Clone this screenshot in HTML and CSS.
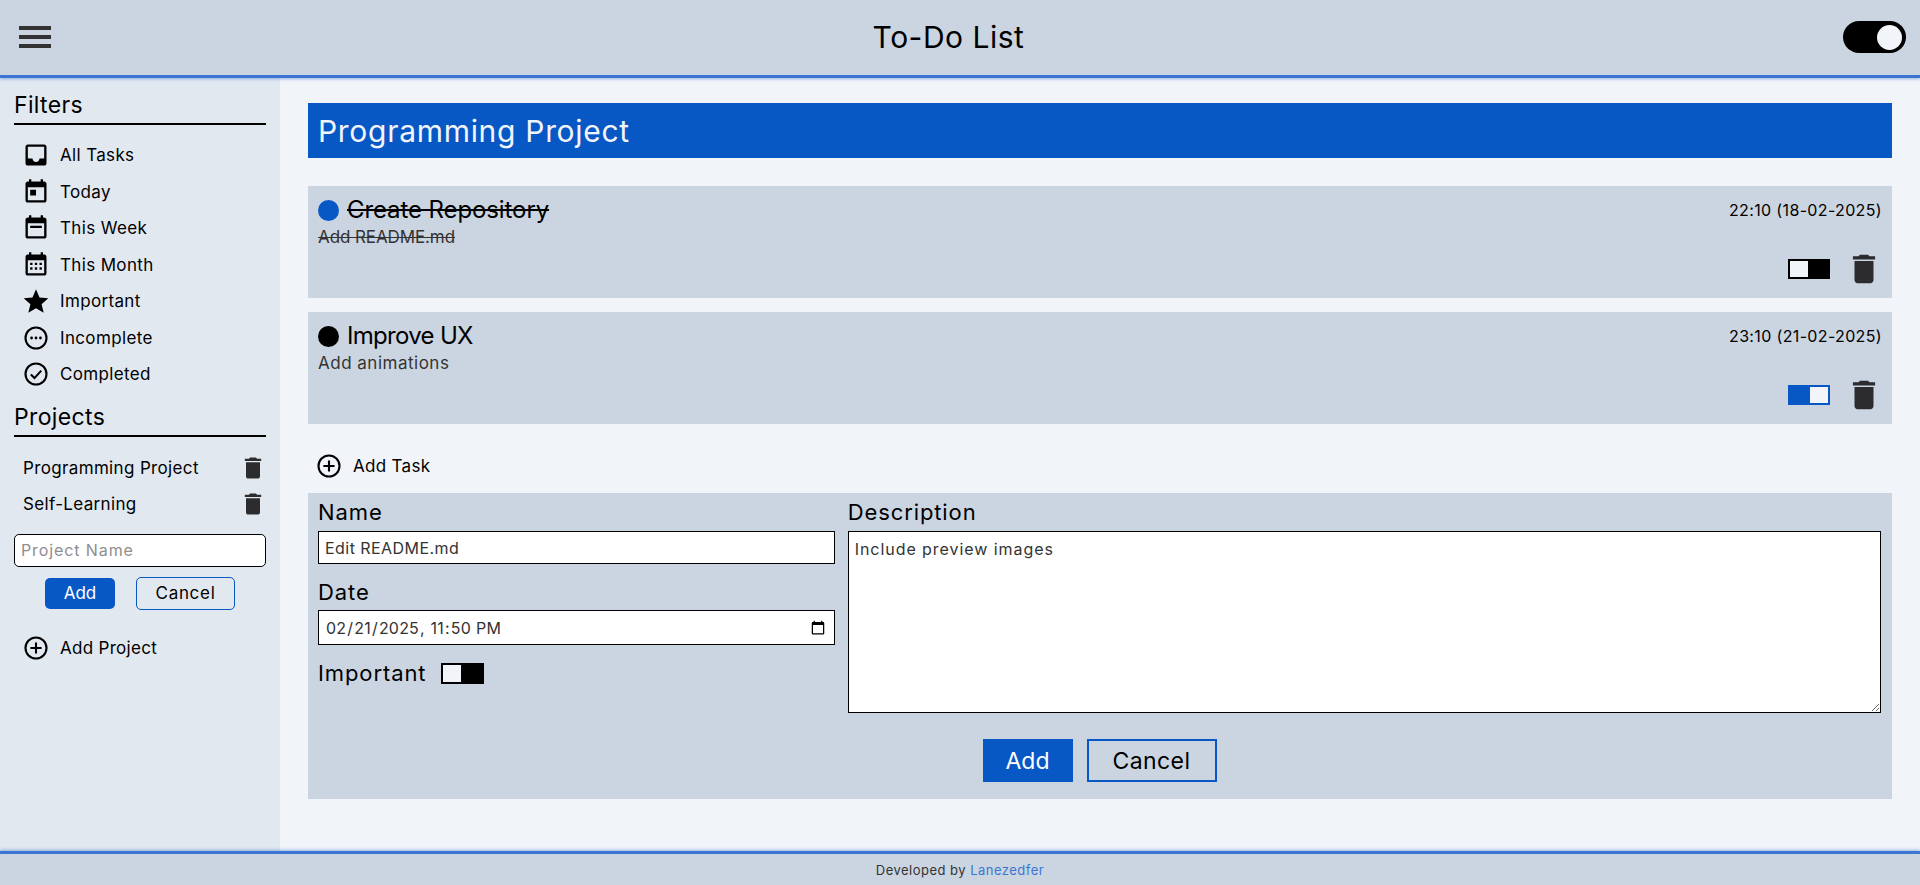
FILE: index.html
```html
<!DOCTYPE html>
<html lang="en">
<head>
<meta charset="utf-8">
<title>To-Do List</title>
<link rel="stylesheet" href="styles.css">
</head>
<body>
<svg class="defs" width="0" height="0" aria-hidden="true">
  <symbol id="i-trash" viewBox="0 0 24 24"><path d="M6 19c0 1.1.9 2 2 2h8c1.1 0 2-.9 2-2V7H6v12zM19 4h-3.5l-1-1h-5l-1 1H5v2h14V4z"/></symbol>
  <symbol id="i-plus" viewBox="0 0 24 24"><circle cx="12" cy="12" r="9" fill="none" stroke="currentColor" stroke-width="1.8"/><path d="M11.1 7.2h1.8v3.9h3.9v1.8h-3.9v3.9h-1.8v-3.9H7.2v-1.8h3.9z"/></symbol>
</svg>
<header class="topbar">
  <button class="menu" aria-label="Menu"><span></span><span></span><span></span></button>
  <h1 class="app-title">To-Do List</h1>
  <span class="theme"><span class="theme-knob"></span></span>
</header>
<div class="body">
  <aside class="side">
    <h2 class="side-head">Filters</h2>
    <ul class="nav">
      <li><svg class="ic" viewBox="0 0 24 24"><path d="M19 3H5c-1.1 0-2 .9-2 2v14c0 1.1.9 2 2 2h14c1.1 0 2-.9 2-2V5c0-1.1-.9-2-2-2zm0 12h-4c0 1.66-1.35 3-3 3s-3-1.34-3-3H5V5h14v10z"/></svg>All Tasks</li>
      <li><svg class="ic" viewBox="0 0 24 24"><path d="M19 3h-1V1h-2v2H8V1H6v2H5c-1.11 0-1.99.9-1.99 2L3 19c0 1.1.89 2 2 2h14c1.1 0 2-.9 2-2V5c0-1.1-.9-2-2-2zm0 16H5V8h14v11zM7 10h5v5H7z"/></svg>Today</li>
      <li><svg class="ic" viewBox="0 0 24 24"><path d="M19 3h-1V1h-2v2H8V1H6v2H5c-1.11 0-1.99.9-1.99 2L3 19c0 1.1.89 2 2 2h14c1.1 0 2-.9 2-2V5c0-1.1-.9-2-2-2zm0 16H5V8h14v11zM7 10h10v2H7z"/></svg>This Week</li>
      <li><svg class="ic" viewBox="0 0 24 24"><path d="M19 3h-1V1h-2v2H8V1H6v2H5c-1.11 0-1.99.9-1.99 2L3 19c0 1.1.89 2 2 2h14c1.1 0 2-.9 2-2V5c0-1.1-.9-2-2-2zm0 16H5V8h14v11zM7 10h2v2H7zm4 0h2v2h-2zm4 0h2v2h-2zM7 14h2v2H7zm4 0h2v2h-2zm4 0h2v2h-2z"/></svg>This Month</li>
      <li><svg class="ic" viewBox="0 0 24 24"><path d="M12 18.2l-6.6 3.9 1.8-7.4L1.5 9.6l7.5-.6L12 2l3 7 7.5.6-5.7 5.1 1.8 7.4z"/></svg>Important</li>
      <li><svg class="ic" viewBox="0 0 24 24"><circle cx="12" cy="12" r="9" fill="none" stroke="currentColor" stroke-width="1.8"/><circle cx="8.2" cy="12" r="1.2"/><circle cx="12" cy="12" r="1.2"/><circle cx="15.8" cy="12" r="1.2"/></svg>Incomplete</li>
      <li><svg class="ic" viewBox="0 0 24 24"><circle cx="12" cy="12" r="9" fill="none" stroke="currentColor" stroke-width="1.8"/><path d="M7.6 12.4l3.1 3.1 5.8-6.4" fill="none" stroke="currentColor" stroke-width="1.8"/></svg>Completed</li>
    </ul>
    <h2 class="side-head projects-head">Projects</h2>
    <ul class="projects">
      <li><span>Programming Project</span><svg class="ic-trash"><use href="#i-trash"/></svg></li>
      <li><span>Self-Learning</span><svg class="ic-trash"><use href="#i-trash"/></svg></li>
    </ul>
    <input class="project-input" type="text" placeholder="Project Name">
    <div class="project-actions">
      <button class="btn-sm btn-sm-primary">Add</button>
      <button class="btn-sm btn-sm-ghost">Cancel</button>
    </div>
    <div class="add-row add-project"><svg class="ic"><use href="#i-plus"/></svg>Add Project</div>
  </aside>
  <main class="main">
    <h2 class="banner">Programming Project</h2>
    <article class="task">
      <div class="task-top">
        <h3 class="task-name done"><span class="dot dot-blue"></span><s>Create Repository</s></h3>
        <time class="task-time">22:10 (18-02-2025)</time>
      </div>
      <p class="task-desc task-desc-done"><s>Add README.md</s></p>
      <div class="task-foot">
        <span class="sw"><span class="sw-knob"></span></span>
        <svg class="task-trash"><use href="#i-trash"/></svg>
      </div>
    </article>
    <article class="task">
      <div class="task-top">
        <h3 class="task-name"><span class="dot"></span>Improve UX</h3>
        <time class="task-time">23:10 (21-02-2025)</time>
      </div>
      <p class="task-desc">Add animations</p>
      <div class="task-foot">
        <span class="sw sw-on"><span class="sw-knob"></span></span>
        <svg class="task-trash"><use href="#i-trash"/></svg>
      </div>
    </article>
    <div class="add-row add-task"><svg class="ic"><use href="#i-plus"/></svg>Add Task</div>
    <form class="form">
      <div class="form-grid">
        <div class="form-left">
          <label class="lbl" for="n">Name</label>
          <input id="n" class="field field-name" type="text" value="Edit README.md">
          <label class="lbl lbl-date" for="d">Date</label>
          <input id="d" class="field field-date" type="datetime-local" value="2025-02-21T23:50">
          <div class="important"><span class="lbl">Important</span><span class="sw sw-form"><span class="sw-knob"></span></span></div>
        </div>
        <div class="form-right">
          <label class="lbl" for="t">Description</label>
          <textarea id="t" class="field area">Include preview images</textarea>
        </div>
      </div>
      <div class="form-actions">
        <button type="button" class="btn btn-primary">Add</button>
        <button type="button" class="btn btn-ghost">Cancel</button>
      </div>
    </form>
  </main>
</div>
<footer class="foot">Developed by&nbsp;<a class="foot-link" href="#">Lanezedfer</a></footer>
</body>
</html>
```
FILE: styles.css
```css
* { box-sizing: border-box; }
html, body { height: 100%; }
body {
  margin: 0;
  display: flex;
  flex-direction: column;
  height: 885px;
  overflow: hidden;
  background: #f1f5f9;
  color: #000;
  font-family: Inter, "Noto Sans", sans-serif;
}
.defs { position: absolute; }
h1, h2, h3, p, ul { margin: 0; padding: 0; font-weight: 400; }
ul { list-style: none; }
svg { fill: currentColor; flex: none; display: block; }

.topbar {
  height: 78px;
  flex: none;
  position: relative;
  z-index: 2;
  display: flex;
  align-items: center;
  justify-content: space-between;
  padding: 0 14px 1px 19px;
  background: #cbd5e1;
  border-bottom: 3px solid #3a75d2;
  box-shadow: 0 1px 3px rgba(58, 117, 210, .5);
}
.menu {
  display: flex;
  flex-direction: column;
  gap: 5px;
  width: 32px;
  padding: 0;
  border: 0;
  background: none;
}
.menu span { height: 4px; background: #333; display: block; }
.app-title { font-size: 30px; letter-spacing: .5px; margin-left: 3px; }
.theme {
  width: 63px;
  height: 32px;
  border-radius: 16px;
  background: #000;
  display: flex;
  justify-content: flex-end;
  align-items: center;
  padding-right: 4px;
}
.theme-knob { width: 25px; height: 25px; border-radius: 50%; background: #f1f5f9; }

.body { flex: 1; display: flex; min-height: 0; }

.side {
  width: 280px;
  flex: none;
  background: #e2e8f0;
  padding: 12px 14px 0;
  font-size: 17px;
  letter-spacing: .35px;
}
.side-head {
  font-size: 23px;
  line-height: 30px;
  padding-bottom: 3px;
  border-bottom: 2px solid #000;
}
.nav { margin-top: 12px; }
.nav li {
  height: 36.5px;
  display: flex;
  align-items: center;
  gap: 10px;
  padding-left: 8px;
}
.ic { width: 28px; height: 28px; }
.projects-head { margin-top: 9px; }
.projects { margin-top: 13px; }
.projects li {
  height: 36.5px;
  display: flex;
  align-items: center;
  justify-content: space-between;
  padding: 0 2px 0 9px;
}
.ic-trash { width: 28px; height: 28px; color: #2c2c2e; margin-right: -3px; }
.project-input {
  display: block;
  width: 100%;
  height: 33px;
  margin-top: 11px;
  padding: 0 6px;
  border: 1px solid #000;
  border-radius: 5px;
  background: #fff;
  font: 16px Inter, sans-serif;
  letter-spacing: .9px;
}
.project-input::placeholder { color: #8e8e8e; }
.project-actions {
  display: flex;
  justify-content: center;
  align-items: center;
  gap: 21px;
  margin-top: 10px;
}
.btn-sm { font: 17px Inter, sans-serif; padding: 0; border-radius: 5px; }
.btn-sm-primary { width: 70px; height: 31px; border: 0; background: #0757c5; color: #fff; }
.btn-sm-ghost { width: 99px; height: 33px; border: 1px solid #0757c5; background: transparent; color: #000; letter-spacing: .7px; }
.add-row { display: flex; align-items: center; gap: 10px; font-size: 17px; letter-spacing: .3px; }
.add-project { margin-top: 24px; padding-left: 8px; }

.main { flex: 1; padding: 25px 28px 0; min-width: 0; }
.banner {
  height: 55px;
  line-height: 57px;
  padding-left: 10px;
  background: #0757c5;
  color: #f1f5f9;
  font-size: 30px;
  letter-spacing: .7px;
}
.task {
  height: 112px;
  margin-top: 14px;
  padding: 9px 10px 0;
  background: #cbd5e1;
  display: flex;
  flex-direction: column;
}
.banner + .task { margin-top: 28px; }
.task-top { display: flex; justify-content: space-between; align-items: flex-start; }
.task-name { display: flex; align-items: center; gap: 8px; font-size: 24px; line-height: 30px; letter-spacing: -.1px; }
.task-name:not(.done) { letter-spacing: -.7px; }
.dot { width: 21px; height: 21px; border-radius: 50%; background: #000; }
.dot-blue { background: #0757c5; }
.task-time { font-size: 16px; line-height: 22px; letter-spacing: .35px; margin-top: 4px; }
.task-desc { font-size: 17px; line-height: 22px; color: #333; letter-spacing: .5px; margin-top: 1px; }
.task-desc-done { letter-spacing: -.1px; }
.task-foot {
  margin-top: auto;
  display: flex;
  justify-content: flex-end;
  align-items: center;
  gap: 23px;
  padding: 0 7px 14px 0;
}
.sw {
  width: 42px;
  height: 20px;
  border: 2px solid #000;
  background: #000;
  display: flex;
  flex: none;
}
.sw-form { width: 43px; height: 21px; }
.sw-knob { width: 18px; height: 100%; background: #f1f5f9; }
.sw-on { border-color: #0757c5; background: #0757c5; justify-content: flex-end; }
.task-trash { width: 38px; height: 38px; color: #2c2c2e; margin: -4px -8px -4px -8px; }
.add-task { height: 69px; padding-left: 7px; padding-top: 14px; }

.form { background: #cbd5e1; height: 306px; padding: 4px 11px 0 10px; }
.form-grid { display: grid; grid-template-columns: 1fr 2fr; column-gap: 13px; }
.lbl { display: block; font-size: 22px; line-height: 30px; letter-spacing: .9px; }
.field {
  display: block;
  width: 100%;
  border: 1px solid #000;
  background: #fff;
  padding: 0 6px;
  font: 16px Inter, sans-serif;
  color: #333;
  border-radius: 0;
}
.form-left, .form-right { min-width: 0; }
.field-name { height: 33px; margin-top: 4px; letter-spacing: .45px; }
.lbl-date { margin-top: 13px; }
.field-date { height: 35px; margin-top: 3px; letter-spacing: .2px; }
.important { display: flex; align-items: center; gap: 15px; margin-top: 13px; }
.area { height: 182px; margin-top: 4px; padding-top: 7px; letter-spacing: .95px; }
.form-actions { display: flex; justify-content: center; gap: 14px; margin-top: 26px; }
.btn { height: 43px; font: 23px Inter, sans-serif; padding: 0; }
.btn-primary { width: 90px; border: 0; background: #0757c5; color: #fff; }
.btn-ghost { width: 130px; border: 2px solid #0757c5; background: transparent; color: #000; letter-spacing: .4px; }

.foot {
  height: 34px;
  flex: none;
  position: relative;
  display: flex;
  align-items: center;
  justify-content: center;
  font-size: 13px;
  letter-spacing: .48px;
  color: #333;
  background: #cbd5e1;
  border-top: 3px solid #3a75d2;
  box-shadow: 0 -1px 3px rgba(58, 117, 210, .5);
}
.foot-link { color: #3a75d2; text-decoration: none; }
```
